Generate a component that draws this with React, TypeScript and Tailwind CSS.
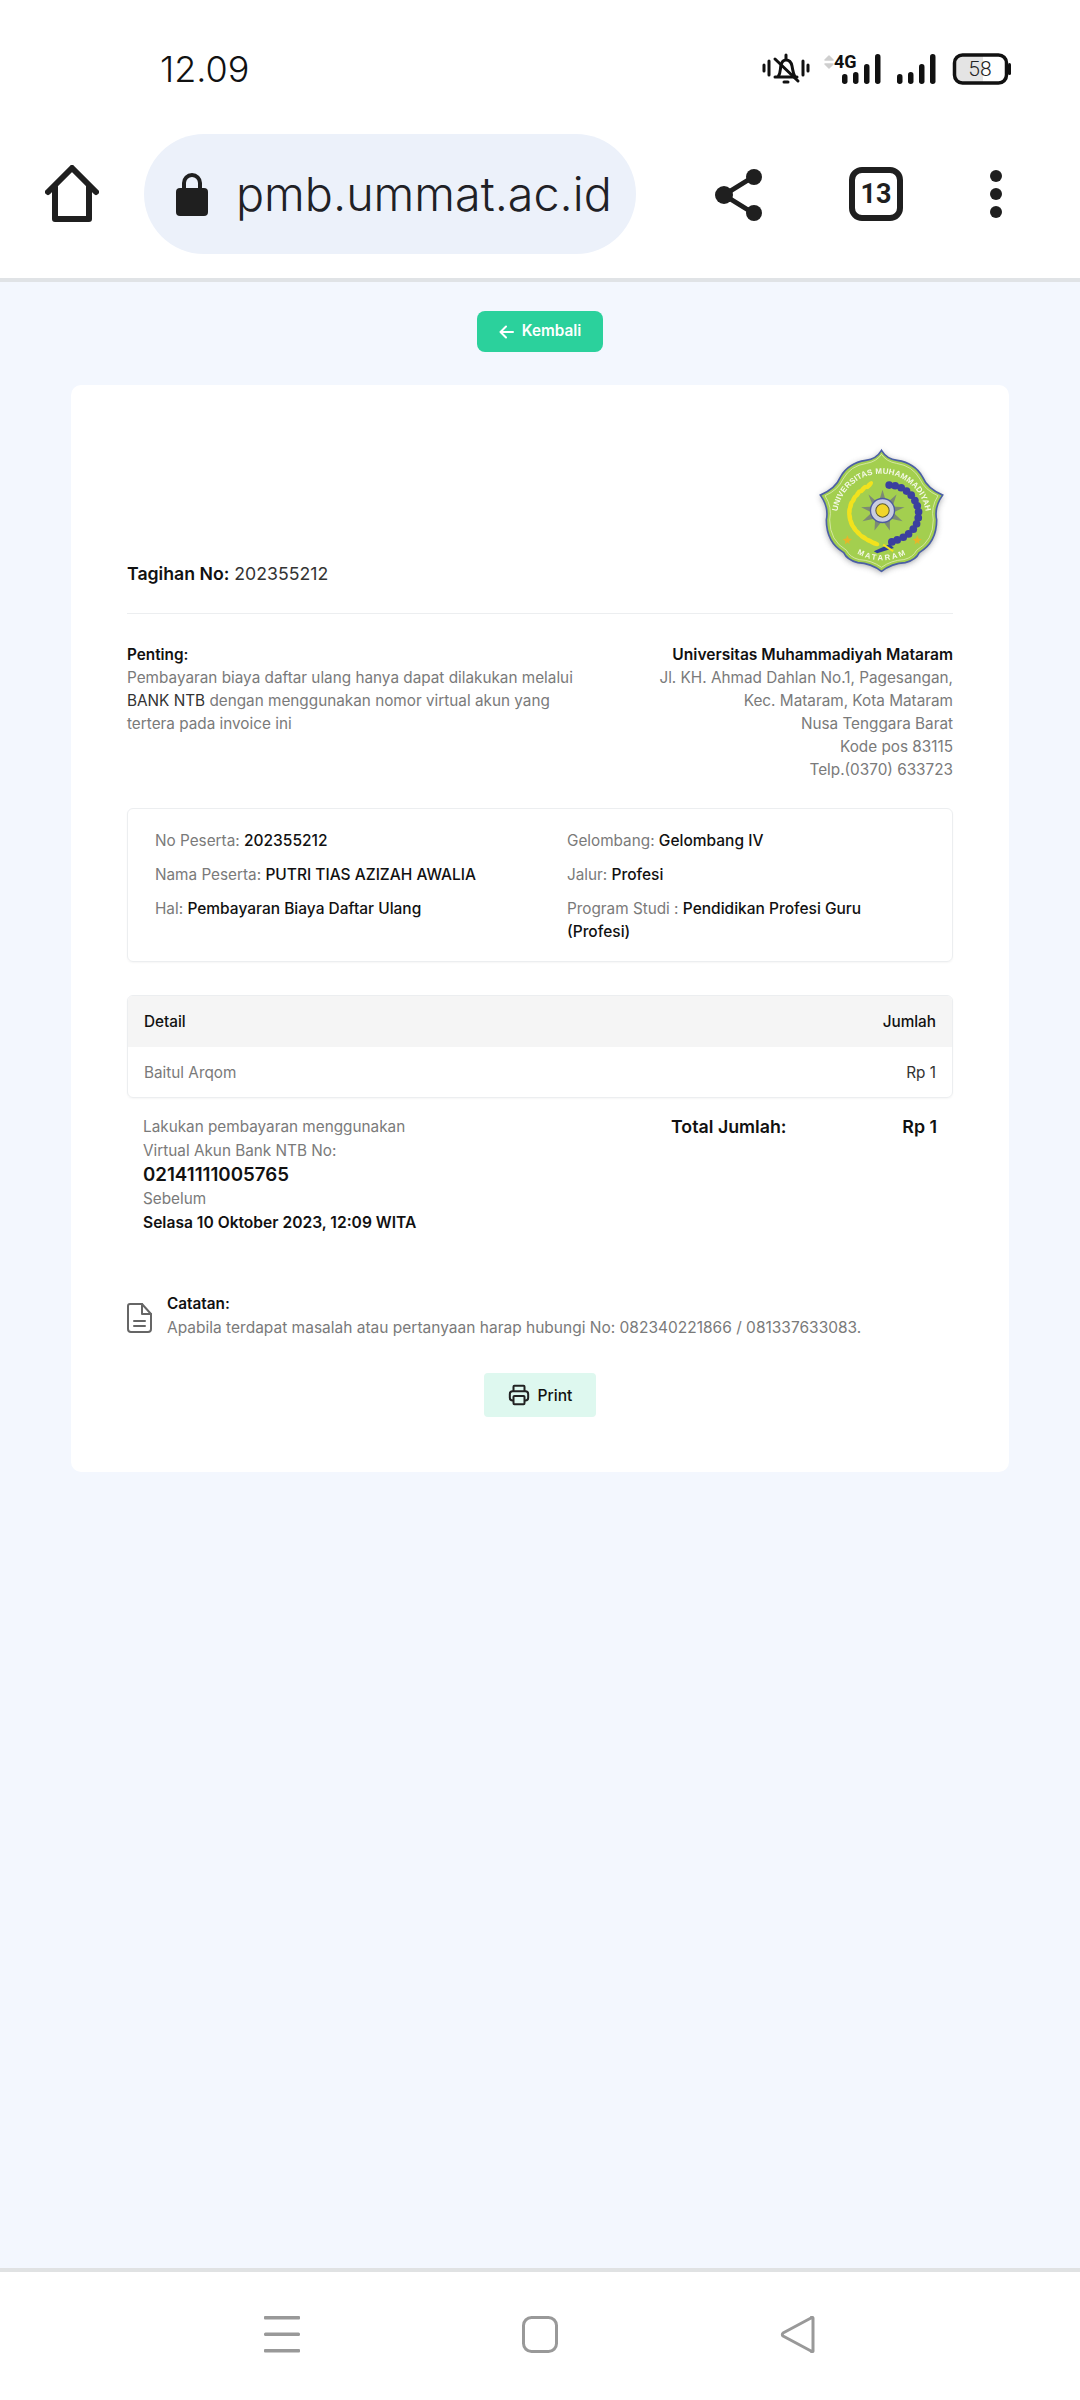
const sans = { fontFamily: 'Inter, sans-serif' };

const outline =
  'M305 92 Q320 118 352 122 Q405 130 428 172 Q442 206 488 226 Q462 262 470 300 Q470 368 418 398 Q408 420 376 428 Q336 430 305 454 Q274 430 234 428 Q202 420 192 398 Q140 368 140 300 Q148 262 122 226 Q168 206 182 172 Q205 130 258 122 Q290 118 305 92 Z';

const beads = [
  [328, 196], [346, 198], [364, 204], [380, 214], [394, 226], [405, 242], [412, 258], [416, 276], [415, 294], [410, 312], [400, 328], [386, 342], [370, 352], [352, 360], [336, 366],
];

const grains = [
  [268, 196, -48], [250, 208, -50], [234, 222, -58], [222, 238, -66], [213, 256, -76], [209, 274, -86], [210, 292, 82], [215, 310, 70], [224, 326, 58], [236, 340, 46], [251, 352, 34], [268, 362, 24], [284, 370, 20],
];

function Logo() {
  return (
    <svg viewBox="100 70 410 410" className="size-[137px] overflow-visible blur-[0.4px]">
      <defs>
        <path id="topArc" d="M 172 312 A 134 134 0 1 1 438 312" />
        <path id="botArc" d="M 216 392 Q 305 450 398 392" />
        <filter id="logoShadow" x="-25%" y="-25%" width="150%" height="150%">
          <feGaussianBlur stdDeviation="9" />
        </filter>
      </defs>
      <path d={outline} fill="#55585f" opacity="0.6" filter="url(#logoShadow)" transform="translate(0 4)" />
      <path d={outline} fill="#a3cf4f" stroke="#4b5fa5" strokeWidth="5" />
      <path
        d="M305 104 Q320 126 350 131 Q398 138 420 178 Q434 210 474 228 Q452 262 460 300 Q460 362 410 391 Q400 412 372 419 Q334 421 305 442 Q276 421 238 419 Q210 412 200 391 Q150 362 150 300 Q158 262 136 228 Q176 210 190 178 Q212 138 260 131 Q290 126 305 104 Z"
        fill="none"
        stroke="#dcebb0"
        strokeWidth="2.5"
      />
      <text fill="#f4f8e6" fontSize="24" fontWeight="700" letterSpacing="0.5" style={{ fontFamily: 'Liberation Sans, sans-serif' }}>
        <textPath href="#topArc" startOffset="50%" textAnchor="middle">
          UNIVERSITAS MUHAMMADIYAH
        </textPath>
      </text>
      <text fill="#f4f8e6" fontSize="23" fontWeight="700" letterSpacing="6" style={{ fontFamily: 'Liberation Sans, sans-serif' }}>
        <textPath href="#botArc" startOffset="50%" textAnchor="middle">
          MATARAM
        </textPath>
      </text>
      {grains.map(([x, y, r]) => (
        <ellipse key={`${x}-${y}`} cx={x} cy={y} rx="15" ry="7" fill="#f2e21d" transform={`rotate(${r} ${x} ${y})`} />
      ))}
      {beads.map(([x, y]) => (
        <circle key={`${x}-${y}`} cx={x} cy={y} r="11.5" fill="#3b3f9f" />
      ))}
      <path d="M282 394 L330 372 L342 384 L292 400 Z" fill="#2f3f98" />
      <path d="M310 374 L340 394" stroke="#f2e21d" strokeWidth="6" />
      <polygon
        points="308,210 320,250 350,224 338,260 374,262 340,278 368,304 330,296 330,332 308,302 284,332 286,296 248,304 276,278 244,262 280,260 266,224 296,250"
        fill="#7b8a75"
      />
      <circle cx="308" cy="272" r="36" fill="#c9cde0" stroke="#4d5aa0" strokeWidth="4" />
      <circle cx="308" cy="272" r="20" fill="#f1d52a" stroke="#5a5a30" strokeWidth="3" />
      <polygon points="203,346 207,356 217,358 208,364 210,374 203,367 195,374 197,364 189,358 199,356" fill="#e7b52a" />
      <polygon points="412,346 416,356 426,358 417,364 419,374 412,367 404,374 406,364 398,358 408,356" fill="#e7b52a" />
    </svg>
  );
}

function StatusBar() {
  return (
    <div className="flex h-[134px] items-start justify-between pl-[160px] pr-[69px] pt-[50px]">
      <span className="text-[36px] leading-[38px] text-[#111]" style={{ fontFamily: 'Inter, sans-serif', fontWeight: 300 }}>
        12.09
      </span>
      <svg width="248" height="32" viewBox="0 0 248 32" className="mt-[3px] overflow-visible">
        <g stroke="#111" strokeWidth="3" fill="none" strokeLinecap="round">
          <path d="M1 12v6M6 8v14M40 8v14M45 12v6" />
          <path d="M12 24h22M15 24c3-4 2-8 3-12 1-4 3-5 5-5s5 1 6 6 1 7 3 11" />
          <path d="M23 2v4M21 29h4M12 6l23 22" />
        </g>
        <path d="M62 7l4-4 4 4zM62 11l4 4 4-4z" fill="#cfcfcf" stroke="#cfcfcf" strokeWidth="1.5" strokeLinejoin="round" />
        <text x="71" y="15" fontSize="18" fontWeight="700" fill="#111" style={{ fontFamily: 'Roboto, sans-serif' }}>
          4G
        </text>
        <g fill="#111">
          <rect x="79" y="21" width="5.5" height="10" rx="2.7" />
          <rect x="90" y="19" width="5.5" height="12" rx="2.7" />
          <rect x="101" y="11" width="5.5" height="20" rx="2.7" />
          <rect x="112" y="1" width="5.5" height="30" rx="2.7" />
          <rect x="134" y="21" width="5.5" height="10" rx="2.7" />
          <rect x="145" y="19" width="5.5" height="12" rx="2.7" />
          <rect x="156" y="11" width="5.5" height="20" rx="2.7" />
          <rect x="167" y="1" width="5.5" height="30" rx="2.7" />
        </g>
        <path d="M197 3h23v26h-23a5 5 0 0 1-5-5v-16a5 5 0 0 1 5-5z" fill="#e4e4e4" />
        <rect x="191.5" y="2" width="52" height="28" rx="8" fill="none" stroke="#111" strokeWidth="3.5" />
        <rect x="245" y="10" width="3" height="12" rx="1.5" fill="#111" />
        <text x="217" y="23" fontSize="21" textAnchor="middle" fill="#222" style={{ fontFamily: 'Roboto, sans-serif', fontWeight: 300 }}>
          58
        </text>
      </svg>
    </div>
  );
}

function Toolbar() {
  return (
    <div className="flex h-[144px] items-start pl-[45px]">
      <svg width="54" height="58" viewBox="0 0 54 58" className="mt-[31px]" fill="none" stroke="#1f1f1f" strokeWidth="6" strokeLinejoin="round" strokeLinecap="round">
        <path d="M3 27L27 3l24 24" />
        <path d="M10 22v32h34V22" />
      </svg>
      <div className="ml-[45px] flex h-[120px] w-[492px] items-center rounded-[60px] bg-[#ecf1fa] pl-[32px]">
        <svg width="32" height="44" viewBox="0 0 32 44" fill="#1f1f1f">
          <path d="M8 18v-7a8 8 0 0 1 16 0v7" fill="none" stroke="#1f1f1f" strokeWidth="4" />
          <rect x="0" y="16" width="32" height="28" rx="4" />
        </svg>
        <span className="ml-[28px] whitespace-nowrap text-[46.7px] leading-none text-[#1f2126]" style={{ fontFamily: 'Inter, sans-serif', fontWeight: 300 }}>
          pmb.ummat.ac.id
        </span>
      </div>
      <svg width="48" height="52" viewBox="0 0 48 52" className="ml-[79px] mt-[35px]" fill="#1f1f1f">
        <path d="M38 8L9 26l29 18" fill="none" stroke="#1f1f1f" strokeWidth="5" />
        <circle cx="39" cy="8" r="8" />
        <circle cx="9" cy="26" r="9" />
        <circle cx="39" cy="44" r="8" />
      </svg>
      <div className="ml-[86px] mt-[33px] flex h-[54px] w-[54px] items-center justify-center rounded-[13px] border-[6px] border-[#1f1f1f] text-[27px] font-bold leading-none text-[#1f1f1f]" style={{ fontFamily: 'Roboto, sans-serif' }}>
        13
      </div>
      <div className="ml-[87px] mt-[36px] flex flex-col gap-[6px]">
        <div className="size-[12px] rounded-full bg-[#1f1f1f]" />
        <div className="size-[12px] rounded-full bg-[#1f1f1f]" />
        <div className="size-[12px] rounded-full bg-[#1f1f1f]" />
      </div>
    </div>
  );
}

function Strong({ children }: { children: React.ReactNode }) {
  return <span className="text-[15.5px] font-medium text-[#111]">{children}</span>;
}

function Invoice() {
  return (
    <div className="mx-[71px] mt-[33px] h-[1087px] rounded-[10px] bg-white px-[56px] text-[15.3px] leading-[23px] text-[#7a7a7a]" style={sans}>
      <div className="relative flex h-[229px] items-end border-b border-[#eceef0] pb-[25px]">
        <div className="text-[17.7px] leading-[28px] text-[#333]">
          <span className="font-semibold text-[#111]">Tagihan No:</span> 202355212
        </div>
        <div className="absolute right-[3px] top-[58px]">
          <Logo />
        </div>
      </div>

      <div className="mt-[29px] flex justify-between">
        <div className="w-[458px]">
          <div className="font-semibold text-[#111]">Penting:</div>
          Pembayaran biaya daftar ulang hanya dapat dilakukan melalui <span className="text-[#333]">BANK NTB</span> dengan menggunakan nomor virtual akun yang tertera pada invoice ini
        </div>
        <div className="text-right">
          <div className="text-[15.6px] font-semibold text-[#111]">Universitas Muhammadiyah Mataram</div>
          <div>Jl. KH. Ahmad Dahlan No.1, Pagesangan,</div>
          <div>Kec. Mataram, Kota Mataram</div>
          <div>Nusa Tenggara Barat</div>
          <div>Kode pos 83115</div>
          <div>Telp.(0370) 633723</div>
        </div>
      </div>

      <div className="mt-[27px] grid h-[154px] grid-cols-[412px_1fr] rounded-[6px] border border-[#eceef0] pl-[27px] pr-[60px] pt-[20px] shadow-[0_1px_2px_rgba(0,0,0,0.04)]">
        <div className="flex flex-col gap-[11px]">
          <div>No Peserta: <Strong>202355212</Strong></div>
          <div>Nama Peserta: <Strong>PUTRI TIAS AZIZAH AWALIA</Strong></div>
          <div>Hal: <Strong>Pembayaran Biaya Daftar Ulang</Strong></div>
        </div>
        <div className="flex flex-col gap-[11px]">
          <div>Gelombang: <Strong>Gelombang IV</Strong></div>
          <div>Jalur: <Strong>Profesi</Strong></div>
          <div>Program Studi : <Strong>Pendidikan Profesi Guru (Profesi)</Strong></div>
        </div>
      </div>

      <div className="mt-[33px] overflow-hidden rounded-[6px] border border-[#eceef0] shadow-[0_1px_2px_rgba(0,0,0,0.04)]">
        <div className="flex h-[51px] items-center justify-between bg-[#f5f5f5] px-[16px] font-medium text-[#111]">
          <span>Detail</span>
          <span>Jumlah</span>
        </div>
        <div className="flex h-[50px] items-center justify-between px-[16px]">
          <span>Baitul Arqom</span>
          <span className="text-[#333]">Rp 1</span>
        </div>
      </div>

      <div className="mt-[17px] flex justify-between px-[16px] leading-[24px]">
        <div>
          <div>Lakukan pembayaran menggunakan</div>
          <div>Virtual Akun Bank NTB No:</div>
          <div className="text-[18.7px] font-semibold text-[#111]">02141111005765</div>
          <div>Sebelum</div>
          <div className="text-[15.6px] font-semibold text-[#111]">Selasa 10 Oktober 2023, 12:09 WITA</div>
        </div>
        <div className="flex w-[266px] justify-between text-[17.8px] font-semibold text-[#111]">
          <span>Total Jumlah:</span>
          <span>Rp 1</span>
        </div>
      </div>

      <div className="mt-[57px] flex items-center gap-[15px] leading-[24px]">
        <svg width="25" height="30" viewBox="0 0 25 30" className="mt-[4px]" fill="none" stroke="#666" strokeWidth="2" strokeLinejoin="round" strokeLinecap="round">
          <path d="M3 1h12l9 10v15a3 3 0 0 1-3 3H4a3 3 0 0 1-3-3V3a2 2 0 0 1 2-2z" />
          <path d="M15 1v10h9M7 18h11M7 23h11" />
        </svg>
        <div>
          <div className="font-semibold text-[#111]">Catatan:</div>
          <div className="text-[15.5px]">Apabila terdapat masalah atau pertanyaan harap hubungi No: 082340221866 / 081337633083.</div>
        </div>
      </div>

      <div className="mt-[33px] flex justify-center">
        <div className="flex h-[44px] w-[112px] items-center justify-center gap-[8px] rounded-[4px] bg-[#def8ef] text-[15.6px] font-medium text-[#111]">
          <svg width="22" height="22" viewBox="0 0 24 24" fill="none" stroke="#222" strokeWidth="2.2" strokeLinejoin="round">
            <path d="M6 8V3a1 1 0 0 1 1-1h10a1 1 0 0 1 1 1v5" />
            <rect x="2" y="8" width="20" height="10" rx="3" />
            <rect x="6" y="13" width="12" height="9" rx="1" fill="#def8ef" />
          </svg>
          Print
        </div>
      </div>
    </div>
  );
}

function BottomNav() {
  return (
    <div className="flex h-[132px] items-start border-t-[4px] border-[#e0e2e3] bg-white pl-[264px] pt-[44px]">
      <svg width="36" height="37" viewBox="0 0 36 37" fill="#999">
        <rect x="0" y="0" width="36" height="3.5" rx="1" />
        <rect x="0" y="16.5" width="36" height="3.5" rx="1.5" />
        <rect x="0" y="33" width="36" height="3.5" rx="1" />
      </svg>
      <svg width="36" height="37" viewBox="0 0 36 37" className="ml-[222px]" fill="none" stroke="#999" strokeWidth="3">
        <rect x="1.5" y="1.5" width="33" height="34" rx="8" />
      </svg>
      <svg width="36" height="37" viewBox="0 0 36 37" className="ml-[222px]" fill="none" stroke="#999" strokeWidth="3" strokeLinejoin="round">
        <path d="M33 2.5a1 1 0 0 0-2-.5L3 17a2 2 0 0 0 0 3l28 15a1 1 0 0 0 2-.5z" />
      </svg>
    </div>
  );
}

export default function App() {
  return (
    <div className="flex h-[2400px] w-[1080px] flex-col bg-[#f3f7fe]">
      <header className="h-[282px] border-b-[4px] border-[#e0e3e6] bg-white">
        <StatusBar />
        <Toolbar />
      </header>
      <main className="flex-1">
        <div className="mt-[29px] flex justify-center">
          <div className="flex h-[41px] w-[126px] items-center justify-center gap-[8px] rounded-[8px] bg-[#2bd19c] text-[15.3px] font-semibold text-white" style={sans}>
            <svg width="15" height="14" viewBox="0 0 15 14" fill="none" stroke="#fff" strokeWidth="2" strokeLinecap="round" strokeLinejoin="round">
              <path d="M14 7H2M7 1.5L1.5 7 7 12.5" />
            </svg>
            Kembali
          </div>
        </div>
        <Invoice />
      </main>
      <BottomNav />
    </div>
  );
}
